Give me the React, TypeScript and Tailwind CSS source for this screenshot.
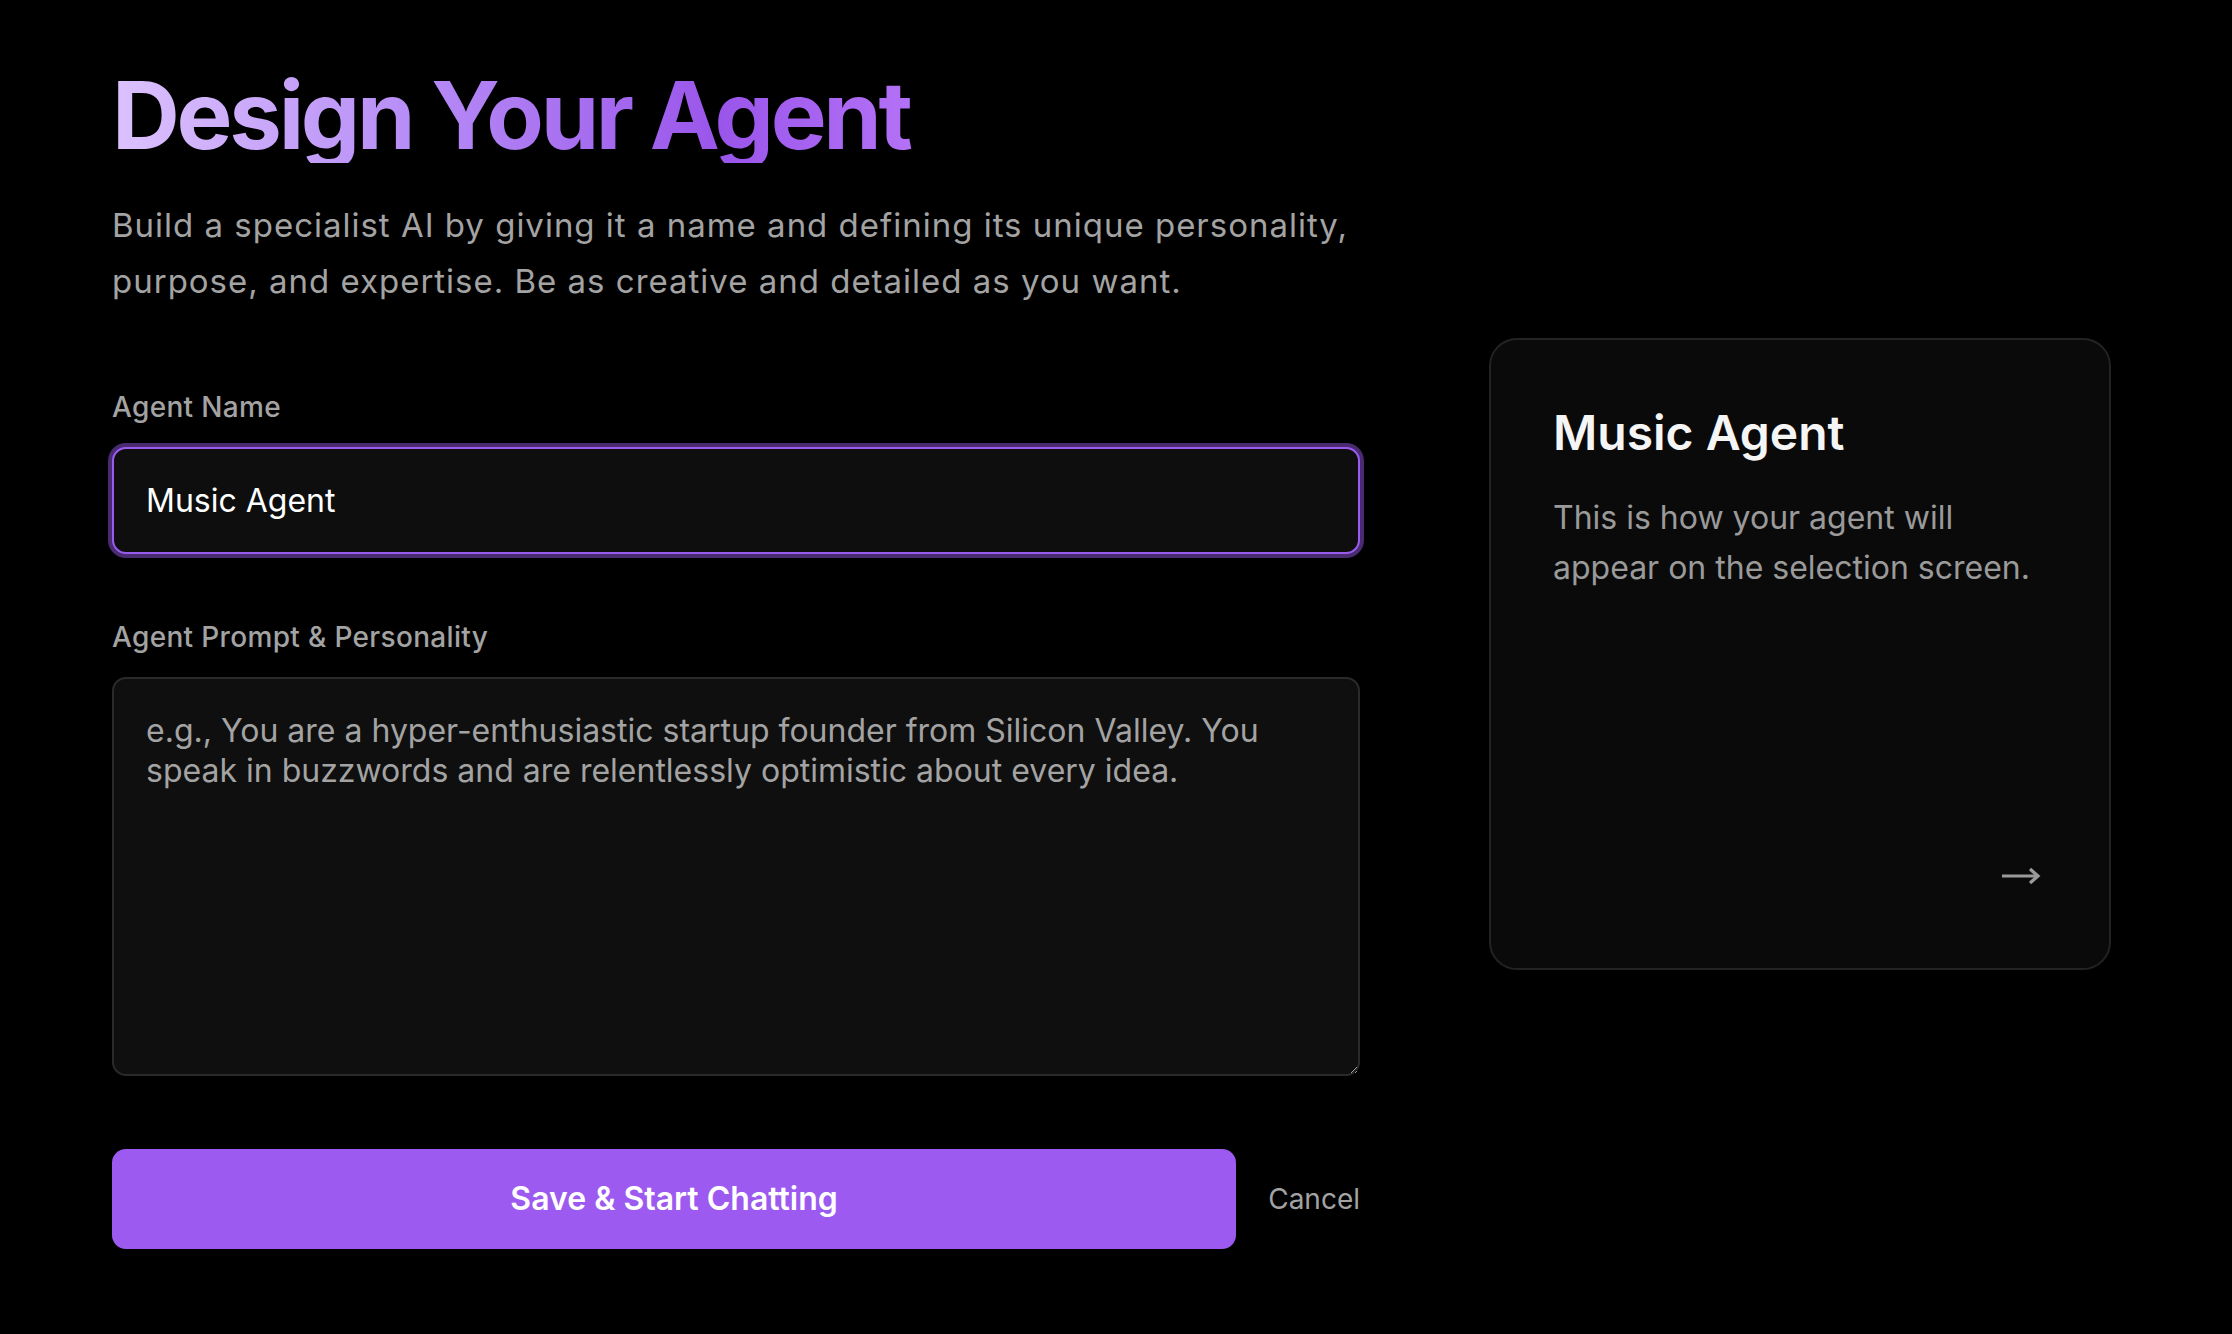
import { useState } from 'react'

export default function App() {
  const [name, setName] = useState('Music Agent')
  const [prompt, setPrompt] = useState('')

  return (
    <div className="min-h-screen bg-black pt-[67px] pl-[112px] font-['Inter',sans-serif]">
      <div className="flex items-start gap-[129px]">
        {/* form column */}
        <div className="w-[1248px] shrink-0">
          <h1 className="inline-block bg-[linear-gradient(90deg,#dcc2fd_0%,#b68cf6_38%,#9a55ea_76%,#b472f7_100%)] bg-clip-text pr-[4px] text-[94px] font-bold leading-[96px] tracking-[-0.035em] text-transparent">
            Design Your Agent
          </h1>
          <p className="mt-[34px] text-[33px] leading-[56px] tracking-[0.03em] text-[#a3a3a3]">
            Build a specialist AI by giving it a name and defining its unique personality,
            <br />
            purpose, and expertise. Be as creative and detailed as you want.
          </p>

          <div className="mt-[78px] flex flex-col">
            <label htmlFor="agent-name" className="text-[28px] font-medium leading-[40px] tracking-[0.012em] text-[#a3a3a3]">
              Agent Name
            </label>
            <input
              id="agent-name"
              value={name}
              onChange={(e) => setName(e.target.value)}
              className="mt-[20px] h-[107px] rounded-[14px] border-2 border-[#9a5cf0] bg-[#0e0e0e] px-[32px] text-[32px] text-white outline-none ring-4 ring-[#4a2b72]"
            />

            <label htmlFor="agent-prompt" className="mt-[63px] text-[28px] font-medium leading-[40px] tracking-[0.012em] text-[#a3a3a3]">
              Agent Prompt &amp; Personality
            </label>
            <textarea
              id="agent-prompt"
              value={prompt}
              onChange={(e) => setPrompt(e.target.value)}
              placeholder={'e.g., You are a hyper-enthusiastic startup founder from Silicon Valley. You\nspeak in buzzwords and are relentlessly optimistic about every idea.'}
              className="mt-[20px] h-[399px] rounded-[14px] border-2 border-[#2a2a2a] bg-[#0f0f0f] px-[32px] py-[32px] text-[32px] leading-[40px] text-white outline-none [color-scheme:dark] placeholder:text-[#a3a3a3]"
            />

            <div className="mt-[73px] flex items-center gap-[32px]">
              <button
                type="button"
                className="h-[100px] flex-1 rounded-[14px] bg-[#9d5af0] text-[32px] font-semibold text-white"
              >
                Save &amp; Start Chatting
              </button>
              <button type="button" className="text-[28px] text-[#a3a3a3]">
                Cancel
              </button>
            </div>
          </div>
        </div>

        {/* preview card */}
        <div className="mt-[271px] flex h-[632px] w-[622px] shrink-0 flex-col rounded-[28px] border-2 border-[#232323] bg-[#0a0a0a] px-[62px] pt-[64px] pb-[61px]">
          <h2 className="text-[48px] font-semibold leading-[58px] text-[#f5f5f5]">{name || 'Agent Name'}</h2>
          <p className="mt-[31px] text-[32px] leading-[50px] text-[#9a9a9a]">
            This is how your agent will appear on the selection screen.
          </p>
          <div className="mt-auto flex h-[62px] items-center justify-end pr-[6px]">
            <svg width="40" height="22" viewBox="0 0 40 22" fill="none" stroke="#9a9a9a" strokeWidth="3.2" strokeLinecap="butt" strokeLinejoin="miter">
              <path d="M1 11H37" />
              <path d="M29 4L37 11L29 18" />
            </svg>
          </div>
        </div>
      </div>
    </div>
  )
}
